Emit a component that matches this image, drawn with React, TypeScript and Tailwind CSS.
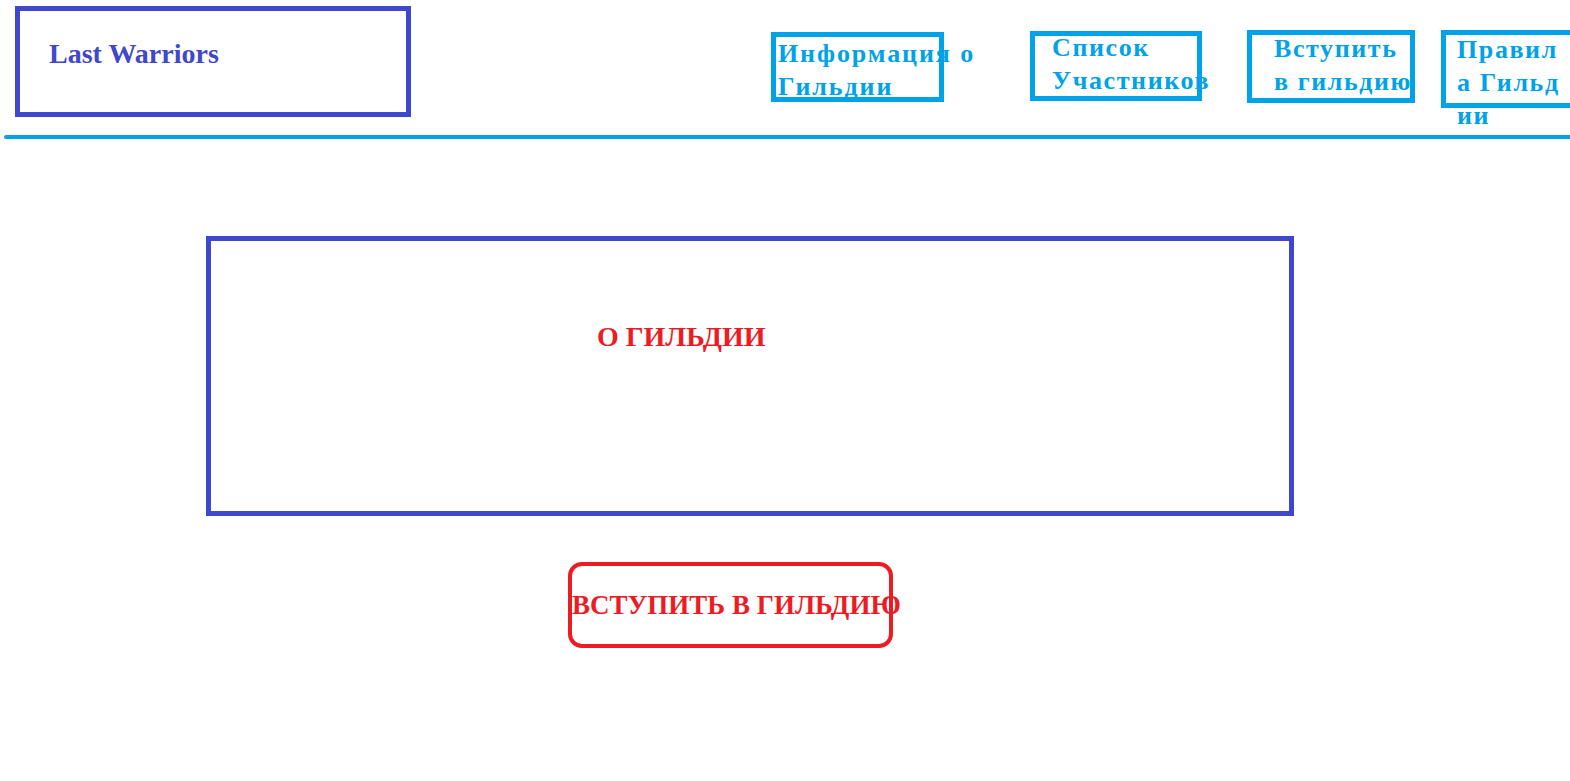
import React from "react";

const serif = { fontFamily: '"Liberation Serif", "DejaVu Serif", serif' };

function NavBox({
  lines,
  className,
  textClass,
}: {
  lines: string[];
  className: string;
  textClass: string;
}) {
  return (
    <div className={`relative shrink-0 border-[5px] border-[#00a2e8] ${className}`}>
      <div className={`absolute whitespace-nowrap text-[26px] font-bold leading-[33px] tracking-[1.6px] text-[#00a2e8] ${textClass}`}>
        {lines.map((l, i) => (
          <div key={i}>{l}</div>
        ))}
      </div>
    </div>
  );
}

export default function App() {
  return (
    <div className="h-[781px] w-full overflow-hidden bg-white" style={serif}>
      <header className="flex items-start">
        <div className="ml-[15px] mt-[6px] h-[111px] w-[396px] shrink-0 border-[5px] border-[#3f48cc] pl-[29px] pt-[29px]">
          <span className="text-[28px] font-bold leading-none text-[#3f48cc]">Last Warriors</span>
        </div>
        <NavBox
          lines={["Информация о", "Гильдии"]}
          className="ml-[360px] mt-[32px] h-[70px] w-[173px]"
          textClass="left-[2px] top-[0px] tracking-[1.9px]"
        />
        <NavBox
          lines={["Список", "Участников"]}
          className="ml-[86px] mt-[31px] h-[70px] w-[172px]"
          textClass="left-[17px] top-[-5px]"
        />
        <NavBox
          lines={["Вступить", "в гильдию"]}
          className="ml-[45px] mt-[30px] h-[73px] w-[168px]"
          textClass="left-[22px] top-[-3px]"
        />
        <NavBox
          lines={["Правил", "а Гильд", "ии"]}
          className="ml-[26px] mt-[30px] h-[78px] w-[150px]"
          textClass="left-[11px] top-[-2px]"
        />
      </header>
      <div className="ml-[4px] mt-[18px] h-[4px] rounded-l-full bg-[#00a2e8]" />
      <main className="ml-[206px]">
        <div className="mt-[97px] h-[280px] w-[1088px] border-[5px] border-[#3f48cc] pl-[386px] pt-[82px]">
          <span className="text-[28px] font-bold leading-none text-[#ed1c24]">О ГИЛЬДИИ</span>
        </div>
        <div className="ml-[362px] mt-[46px] flex h-[86px] w-[325px] items-center rounded-[14px] border-4 border-[#ed1c24]">
          <span className="ml-[0px] whitespace-nowrap text-[27px] font-bold leading-none text-[#ed1c24]">
            ВСТУПИТЬ В ГИЛЬДИЮ
          </span>
        </div>
      </main>
    </div>
  );
}
